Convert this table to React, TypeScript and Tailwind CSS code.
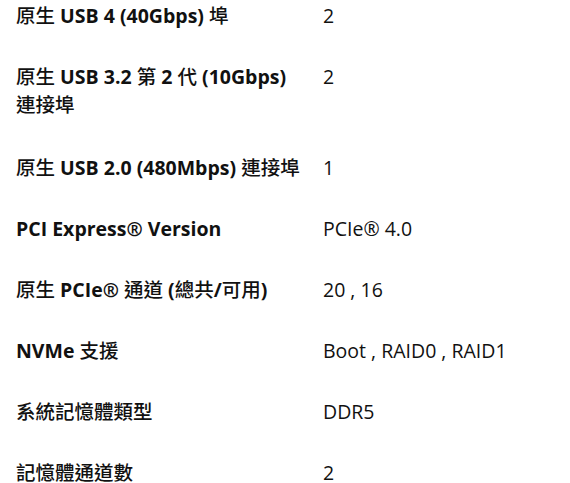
import React from "react";

const specs: { label: string; value: string; extra?: boolean }[] = [
  { label: "原生 USB 4 (40Gbps) 埠", value: "2" },
  { label: "原生 USB 3.2 第 2 代 (10Gbps) 連接埠", value: "2", extra: true },
  { label: "原生 USB 2.0 (480Mbps) 連接埠", value: "1" },
  { label: "PCI Express® Version", value: "PCIe® 4.0" },
  { label: "原生 PCIe® 通道 (總共/可用)", value: "20 , 16" },
  { label: "NVMe 支援", value: "Boot , RAID0 , RAID1" },
  { label: "系統記憶體類型", value: "DDR5" },
  { label: "記憶體通道數", value: "2" },
];

// CJK glyphs in the labels render lighter than the bold latin text
function Label({ text }: { text: string }) {
  const parts = text.split(/([\u3400-\u9fff\uf900-\ufaff]+)/);
  return (
    <>
      {parts.map((part, i) =>
        /[\u3400-\u9fff]/.test(part) ? (
          <span key={i} className="font-medium">
            {part}
          </span>
        ) : (
          <span key={i}>{part}</span>
        ),
      )}
    </>
  );
}

export default function App() {
  return (
    <div
      className="min-h-[483px] w-[570px] overflow-hidden bg-white text-[19.5px] leading-[28px] text-[#111]"
      style={{ fontFamily: '"Open Sans", "Noto Sans CJK TC", sans-serif' }}
    >
      <div className="-mt-[14px] px-4">
        {specs.map((row) => (
          <div
            key={row.label}
            className={`grid grid-cols-[291px_1fr] gap-x-[16px] pt-[16px] ${
              row.extra ? "pb-[19px]" : "pb-[17px]"
            }`}
          >
            <div className="break-keep font-bold">
              <Label text={row.label} />
            </div>
            <div>{row.value}</div>
          </div>
        ))}
      </div>
    </div>
  );
}
